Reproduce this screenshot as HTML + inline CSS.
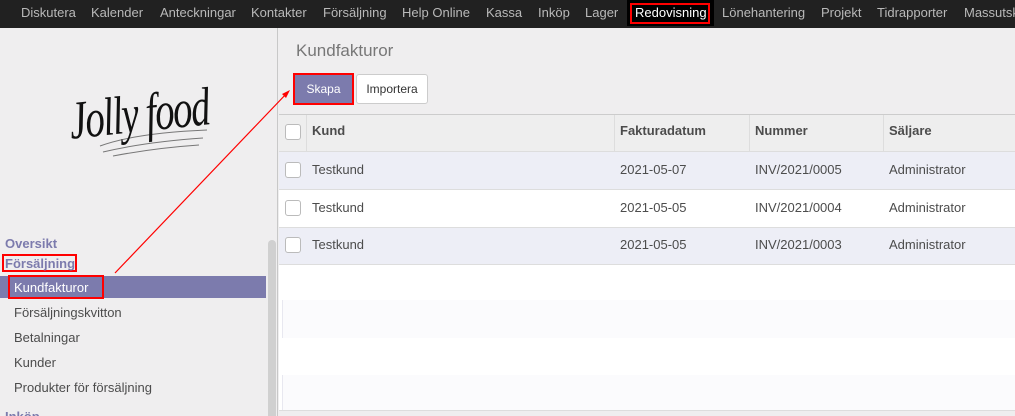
<!DOCTYPE html>
<html><head><meta charset="utf-8"><style>
*{margin:0;padding:0;box-sizing:border-box}
html,body{width:1015px;height:416px;overflow:hidden}
body{background:#efeeef;font-family:"Liberation Sans",sans-serif;position:relative}
.nav{position:absolute;left:0;top:0;width:1015px;height:28px;background:#212121;white-space:nowrap}
.nav span{position:absolute;top:5px;font-size:13px;color:#b9b9b9}
.side{position:absolute;left:0;top:28px;width:278px;height:388px;background:#efeeef;border-right:1px solid #c8c8c8;overflow:hidden}
.main{position:absolute;left:279px;top:28px;width:736px;height:388px;background:#efeeef;overflow:hidden}
.abs{position:absolute}
.hdr{font-weight:bold;color:#555;font-size:13px}
.cell{position:absolute;font-size:13px;color:#4c4c4c}
.cb{position:absolute;left:6px;width:16px;height:16px;border:1px solid #bbb;border-radius:3px;background:#fff}
</style></head><body>
<div class="nav">
<span style="left:21px">Diskutera</span>
<span style="left:91px">Kalender</span>
<span style="left:160px">Anteckningar</span>
<span style="left:251px">Kontakter</span>
<span style="left:323px">Försäljning</span>
<span style="left:402px">Help Online</span>
<span style="left:486px">Kassa</span>
<span style="left:538px">Inköp</span>
<span style="left:585px">Lager</span>
<div class="abs" style="left:627px;top:0;width:87px;height:26px;background:#000"></div>
<div class="abs" style="left:630px;top:3px;width:80px;height:21px;border:2px solid #f00"></div>
<span style="left:635px;color:#fff">Redovisning</span>
<span style="left:722px">Lönehantering</span>
<span style="left:821px">Projekt</span>
<span style="left:877px">Tidrapporter</span>
<span style="left:964px">Massutsk</span>
</div>
<div class="side">
<svg class="abs" style="left:95px;top:90px" width="120" height="45"><path d="M5 28 Q40 15 112 12 M8 34 Q50 24 108 20 M18 38 Q60 30 104 27" stroke="#777" fill="none" stroke-width="1"/></svg>
<div class="abs" style="left:66px;top:62px;font-family:'Liberation Serif',serif;font-style:italic;font-size:54px;color:#111;transform:rotate(-6deg) scaleX(0.72);transform-origin:left top;letter-spacing:-2px">Jolly food</div>
<div class="abs" style="left:5px;top:208px;font-size:13px;font-weight:bold;color:#7c7bad">Oversikt</div>
<div class="abs" style="left:2px;top:226px;width:75px;height:18px;border:2px solid #f00"></div>
<div class="abs" style="left:5px;top:228px;font-size:13px;font-weight:bold;color:#7c7bad">Försäljning</div>
<div class="abs" style="left:0;top:248px;width:266px;height:22px;background:#7c7bad"></div>
<div class="abs" style="left:8px;top:247px;width:96px;height:24px;border:2px solid #f00"></div>
<div class="abs" style="left:14px;top:252px;font-size:13px;color:#fff">Kundfakturor</div>
<div class="abs" style="left:14px;top:277px;font-size:13px;color:#4c4c4c">Försäljningskvitton</div>
<div class="abs" style="left:14px;top:302px;font-size:13px;color:#4c4c4c">Betalningar</div>
<div class="abs" style="left:14px;top:327px;font-size:13px;color:#4c4c4c">Kunder</div>
<div class="abs" style="left:14px;top:352px;font-size:13px;color:#4c4c4c">Produkter för försäljning</div>
<div class="abs" style="left:5px;top:381px;font-size:13px;font-weight:bold;color:#7c7bad">Inköp</div>
<div class="abs" style="left:268px;top:212px;width:8px;height:180px;background:#d0d0d0;border-radius:4px"></div>
</div>
<div class="main">
<div class="abs" style="left:17px;top:13px;font-size:17px;color:#777">Kundfakturor</div>
<div class="abs" style="left:14px;top:45px;width:61px;height:32px;border:2px solid #f00"></div>
<div class="abs" style="left:16px;top:47px;width:57px;height:28px;background:#7c7bad;color:#fff;font-size:12px;text-align:center;line-height:28px">Skapa</div>
<div class="abs" style="left:77px;top:46px;width:72px;height:30px;background:#fff;border:1px solid #ccc;border-radius:3px;color:#333;font-size:12px;text-align:center;line-height:28px">Importera</div>
<div class="abs" style="left:0;top:86px;width:736px;height:296px;background:#fff;border-top:1px solid #ccc"></div>
<div class="abs" style="left:0;top:87px;width:736px;height:37px;background:#eeeeee;border-bottom:1px solid #ddd"></div>
<div class="abs" style="left:27px;top:87px;width:1px;height:37px;background:#ddd"></div>
<div class="abs" style="left:335px;top:87px;width:1px;height:37px;background:#ddd"></div>
<div class="abs" style="left:470px;top:87px;width:1px;height:37px;background:#ddd"></div>
<div class="abs" style="left:604px;top:87px;width:1px;height:37px;background:#ddd"></div>
<div class="cb" style="top:96px"></div>
<div class="cell hdr" style="left:33px;top:95px">Kund</div>
<div class="cell hdr" style="left:341px;top:95px">Fakturadatum</div>
<div class="cell hdr" style="left:476px;top:95px">Nummer</div>
<div class="cell hdr" style="left:610px;top:95px">Säljare</div>
<div class="abs" style="left:0;top:124px;width:736px;height:38px;background:#edeef6;border-bottom:1px solid #ddd"></div>
<div class="abs" style="left:0;top:199px;width:736px;height:38px;background:#edeef6;border-top:1px solid #ddd;border-bottom:1px solid #ddd"></div>
<div class="cb" style="top:134px"></div><div class="cell" style="left:33px;top:134px">Testkund</div><div class="cell" style="left:341px;top:134px">2021-05-07</div><div class="cell" style="left:476px;top:134px">INV/2021/0005</div><div class="cell" style="left:610px;top:134px">Administrator</div>
<div class="cb" style="top:172px"></div><div class="cell" style="left:33px;top:172px">Testkund</div><div class="cell" style="left:341px;top:172px">2021-05-05</div><div class="cell" style="left:476px;top:172px">INV/2021/0004</div><div class="cell" style="left:610px;top:172px">Administrator</div>
<div class="cb" style="top:209px"></div><div class="cell" style="left:33px;top:209px">Testkund</div><div class="cell" style="left:341px;top:209px">2021-05-05</div><div class="cell" style="left:476px;top:209px">INV/2021/0003</div><div class="cell" style="left:610px;top:209px">Administrator</div>
<div class="abs" style="left:3px;top:272px;width:733px;height:38px;border-left:1px solid #e8e8f0;background:#fbfbfd"></div>
<div class="abs" style="left:3px;top:347px;width:733px;height:35px;border-left:1px solid #e8e8f0;background:#fbfbfd"></div>
<div class="abs" style="left:0;top:382px;width:736px;height:6px;background:#efeeef;border-top:1px solid #ddd"></div>
</div>
<svg class="abs" style="left:0;top:0" width="1015" height="416"><line x1="115" y1="273" x2="288" y2="92" stroke="#f00" stroke-width="1.2"/><path d="M290 90 L282 94 L286 98 Z" fill="#f00"/></svg>
</body></html>
